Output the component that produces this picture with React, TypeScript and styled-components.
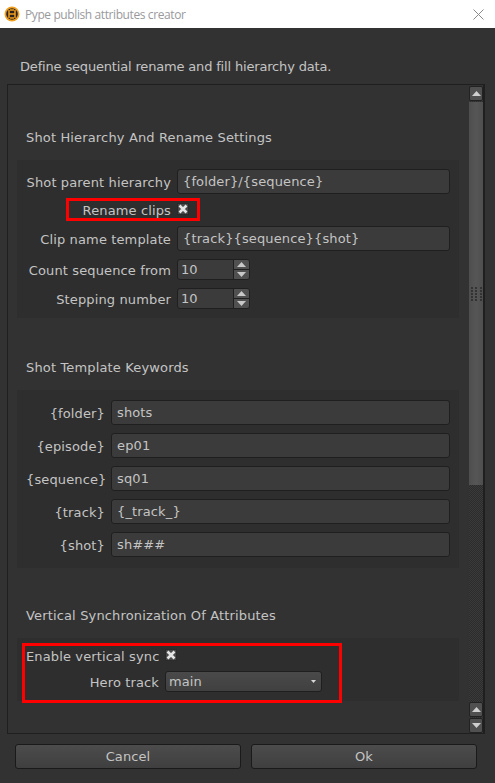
import React from "react";
import styled, { createGlobalStyle } from "styled-components";

const Global = createGlobalStyle`
  html, body { margin: 0; padding: 0; background: #323232; }
  * { box-sizing: border-box; }
`;

const Win = styled.div`
  width: 495px; height: 783px; display: flex; flex-direction: column; overflow: hidden;
  background: #323232; color: #c4c4c4;
  font: 13px "DejaVu Sans", sans-serif;
`;
const TitleBar = styled.div`
  height: 28px; background: #fff; display: flex; align-items: center; padding: 0 11px 0 4px; gap: 5px;
  color: #99999c; font: 12px "Open Sans", "Noto Sans", sans-serif; letter-spacing: -0.4px;
`;
const TitleText = styled.span`flex: 1;`;
const Intro = styled.div`
  height: 56px; padding: 31px 0 0 20px; line-height: 16px; letter-spacing: -0.17px;
`;
const Frame = styled.div`
  margin: 0 10px 0 7px; height: 650px; border: 1px solid #1f1f1f; display: flex;
`;
const Content = styled.div`
  flex: 1; overflow: hidden; padding: 0 0 0 9px; display: flex; flex-direction: column;
`;
const Heading = styled.div<{ $top: number }>`
  margin-top: ${p => p.$top}px; height: 16px; flex: none; line-height: 18px; padding-left: 9px; letter-spacing: 0.15px;
`;
const Panel = styled.div<{ $label: number; $pad: number; $padBottom?: number; $rowGap?: number }>`
  margin-top: 15px; flex: none; width: 442px; background: #2e2e2e;
  padding: ${p => p.$pad}px 9px ${p => p.$padBottom ?? 9}px 9px;
  display: grid; grid-template-columns: ${p => p.$label}px 1fr; column-gap: 6px;
  row-gap: ${p => p.$rowGap ?? 8}px; align-items: center;
`;
const Label = styled.div`
  text-align: right; white-space: nowrap; height: 16px; line-height: 18px; letter-spacing: 0.13px;
`;
const Field = styled.div`
  height: 25px; background: #3b3b3b; border: 1px solid #1f1f1f; border-radius: 3px;
  padding-left: 5px; line-height: 24px; letter-spacing: 0.13px;
`;
const CheckRow = styled.div`height: 16px; display: flex; align-items: flex-start; padding-top: 1px;`;
const Box = styled.div`
  width: 12px; height: 12px; background: #484848; border: 1px solid #2a2a2a; display: flex; align-items: center; justify-content: center;
`;
const Spin = styled.div`
  width: 73px; height: 21px; display: flex; background: #3b3b3b; border: 1px solid #1f1f1f; border-radius: 3px; overflow: hidden;
`;
const SpinText = styled.div`flex: 1; padding-left: 3px; line-height: 19px; letter-spacing: 0.1px;`;
const SpinBtns = styled.div`width: 16px; display: flex; flex-direction: column; gap: 1px; background: #1f1f1f; border-left: 1px solid #1f1f1f;`;
const SpinBtn = styled.div`flex: 1; background: #505050; display: flex; align-items: center; justify-content: center;`;
const Combo = styled.div`
  width: 157px; height: 21px; background: linear-gradient(#4a4a4a, #404040); border: 1px solid #1f1f1f; border-radius: 3px;
  display: flex; align-items: center; justify-content: space-between; padding: 0 5px 0 3px; letter-spacing: 0.1px;
`;
const Bar = styled.div`
  width: 16px; flex: none; display: flex; flex-direction: column; padding: 1px 0 0 1px;
  border-right: 1px solid #1f1f1f; background-clip: content-box;
  background-image: repeating-conic-gradient(#3a3a3a 0 25%, #2c2c2c 0 50%); background-size: 2px 2px;
`;
const BarBtn = styled.div<{ $gap?: number }>`
  height: 15px; flex: none; margin-bottom: ${p => p.$gap ?? 0}px; background: #505050; border: 1px solid #222; border-radius: 2px;
  display: flex; align-items: center; justify-content: center;
`;
const Handle = styled.div`
  height: 383px; flex: none; background: linear-gradient(90deg, #4e4e4e, #565656, #4e4e4e); margin-bottom: auto;
  display: flex; align-items: center; justify-content: center;
`;
const Grip = styled.div`
  width: 11px; height: 14px; display: grid; grid-template-columns: repeat(3, 2px); grid-auto-rows: 2px; gap: 1px 2.5px;
  span { background: #333; display: block; }
`;
const Footer = styled.div`
  display: flex; gap: 10px; padding: 10px 18px 0 15px;
`;
const Button = styled.div`
  flex: 1; height: 25px; background: linear-gradient(#4c4c4c, #3f3f3f); border: 1px solid #1a1a1a; border-radius: 3px;
  text-align: center; line-height: 24px; letter-spacing: 0.1px;
`;
const Highlight = styled.div<{ $x: number; $y: number; $w: number; $h: number }>`
  position: absolute; left: ${p => p.$x}px; top: ${p => p.$y}px; width: ${p => p.$w}px; height: ${p => p.$h}px;
  border: 3px solid #fe0000; pointer-events: none;
`;
const Root = styled.div`position: relative; width: 495px; height: 783px;`;

const Up = ({ c = "#cfcfcf" }: { c?: string }) => (
  <svg width="9" height="5" viewBox="0 0 9 5"><path d="M4.5 0 9 5H0z" fill={c} /></svg>
);
const Down = ({ c = "#cfcfcf" }: { c?: string }) => (
  <svg width="9" height="5" viewBox="0 0 9 5"><path d="M0 0h9L4.500 5z" fill={c} /></svg>
);
const SmallDown = () => (
  <svg width="5" height="3" viewBox="0 0 5 3"><path d="M0 0h5L2.500 3z" fill="#d8d8d8" /></svg>
);
const Cross = () => (
  <svg width="10" height="10" viewBox="0 0 10 10"><path d="M1.500 1.500l7 7M8.500 1.500l-7 7" stroke="#e4e4e4" strokeWidth="2.6" /></svg>
);
const Logo = () => (
  <svg width="16" height="16" viewBox="0 0 16 16">
    <circle cx="8" cy="8" r="7.500" fill="#f2a01e" />
    <circle cx="8" cy="8" r="5.800" fill="#2a2320" />
    <path d="M5 4v8M11 4v8M5 8h6M6 4h4M6 12h4" stroke="#f2a01e" strokeWidth="1.500" />
  </svg>
);
const SpinBox = ({ v }: { v: string }) => (
  <Spin>
    <SpinText>{v}</SpinText>
    <SpinBtns>
      <SpinBtn><Up c="#c8c8c8" /></SpinBtn>
      <SpinBtn><Down c="#c8c8c8" /></SpinBtn>
    </SpinBtns>
  </Spin>
);

const keywords: [string, string][] = [
  ["{folder}", "shots"],
  ["{episode}", "ep01"],
  ["{sequence}", "sq01"],
  ["{track}", "{_track_}"],
  ["{shot}", "sh###"],
];

export default function App() {
  return (
    <Root>
      <Global />
      <Win>
        <TitleBar>
          <Logo />
          <TitleText>Pype publish attributes creator</TitleText>
          <svg width="11" height="11" viewBox="0 0 11 11"><path d="M.500.500l10 10M10.500.500l-10 10" stroke="#8a8a8a" strokeWidth="1" /></svg>
        </TitleBar>
        <Intro>Define sequential rename and fill hierarchy data.</Intro>
        <Frame>
          <Content>
            <Heading $top={44}>Shot Hierarchy And Rename Settings</Heading>
            <Panel $label={145} $pad={9}>
              <Label>Shot parent hierarchy</Label>
              <Field>{"{folder}/{sequence}"}</Field>
              <Label>Rename clips</Label>
              <CheckRow><Box><Cross /></Box></CheckRow>
              <Label>Clip name template</Label>
              <Field>{"{track}{sequence}{shot}"}</Field>
              <Label>Count sequence from</Label>
              <SpinBox v="10" />
              <Label>Stepping number</Label>
              <SpinBox v="10" />
            </Panel>
            <Heading $top={41}>Shot Template Keywords</Heading>
            <Panel $label={79} $pad={10} $padBottom={11}>
              {keywords.map(([k, v]) => (
                <React.Fragment key={k}>
                  <Label>{k}</Label>
                  <Field>{v}</Field>
                </React.Fragment>
              ))}
            </Panel>
            <Heading $top={39}>Vertical Synchronization Of Attributes</Heading>
            <Panel $label={133} $pad={10} $rowGap={7}>
              <Label>Enable vertical sync</Label>
              <CheckRow><Box><Cross /></Box></CheckRow>
              <Label>Hero track</Label>
              <Combo>main<SmallDown /></Combo>
            </Panel>
          </Content>
          <Bar>
            <BarBtn $gap={1}><Up /></BarBtn>
            <Handle>
              <Grip>{Array.from({ length: 15 }, (_, i) => <span key={i} />)}</Grip>
            </Handle>
            <BarBtn $gap={1}><Up /></BarBtn>
            <BarBtn><Down /></BarBtn>
          </Bar>
        </Frame>
        <Footer>
          <Button>Cancel</Button>
          <Button>Ok</Button>
        </Footer>
      </Win>
      <Highlight $x={66} $y={198} $w={134} $h={23} />
      <Highlight $x={22} $y={643} $w={320} $h={60} />
    </Root>
  );
}
